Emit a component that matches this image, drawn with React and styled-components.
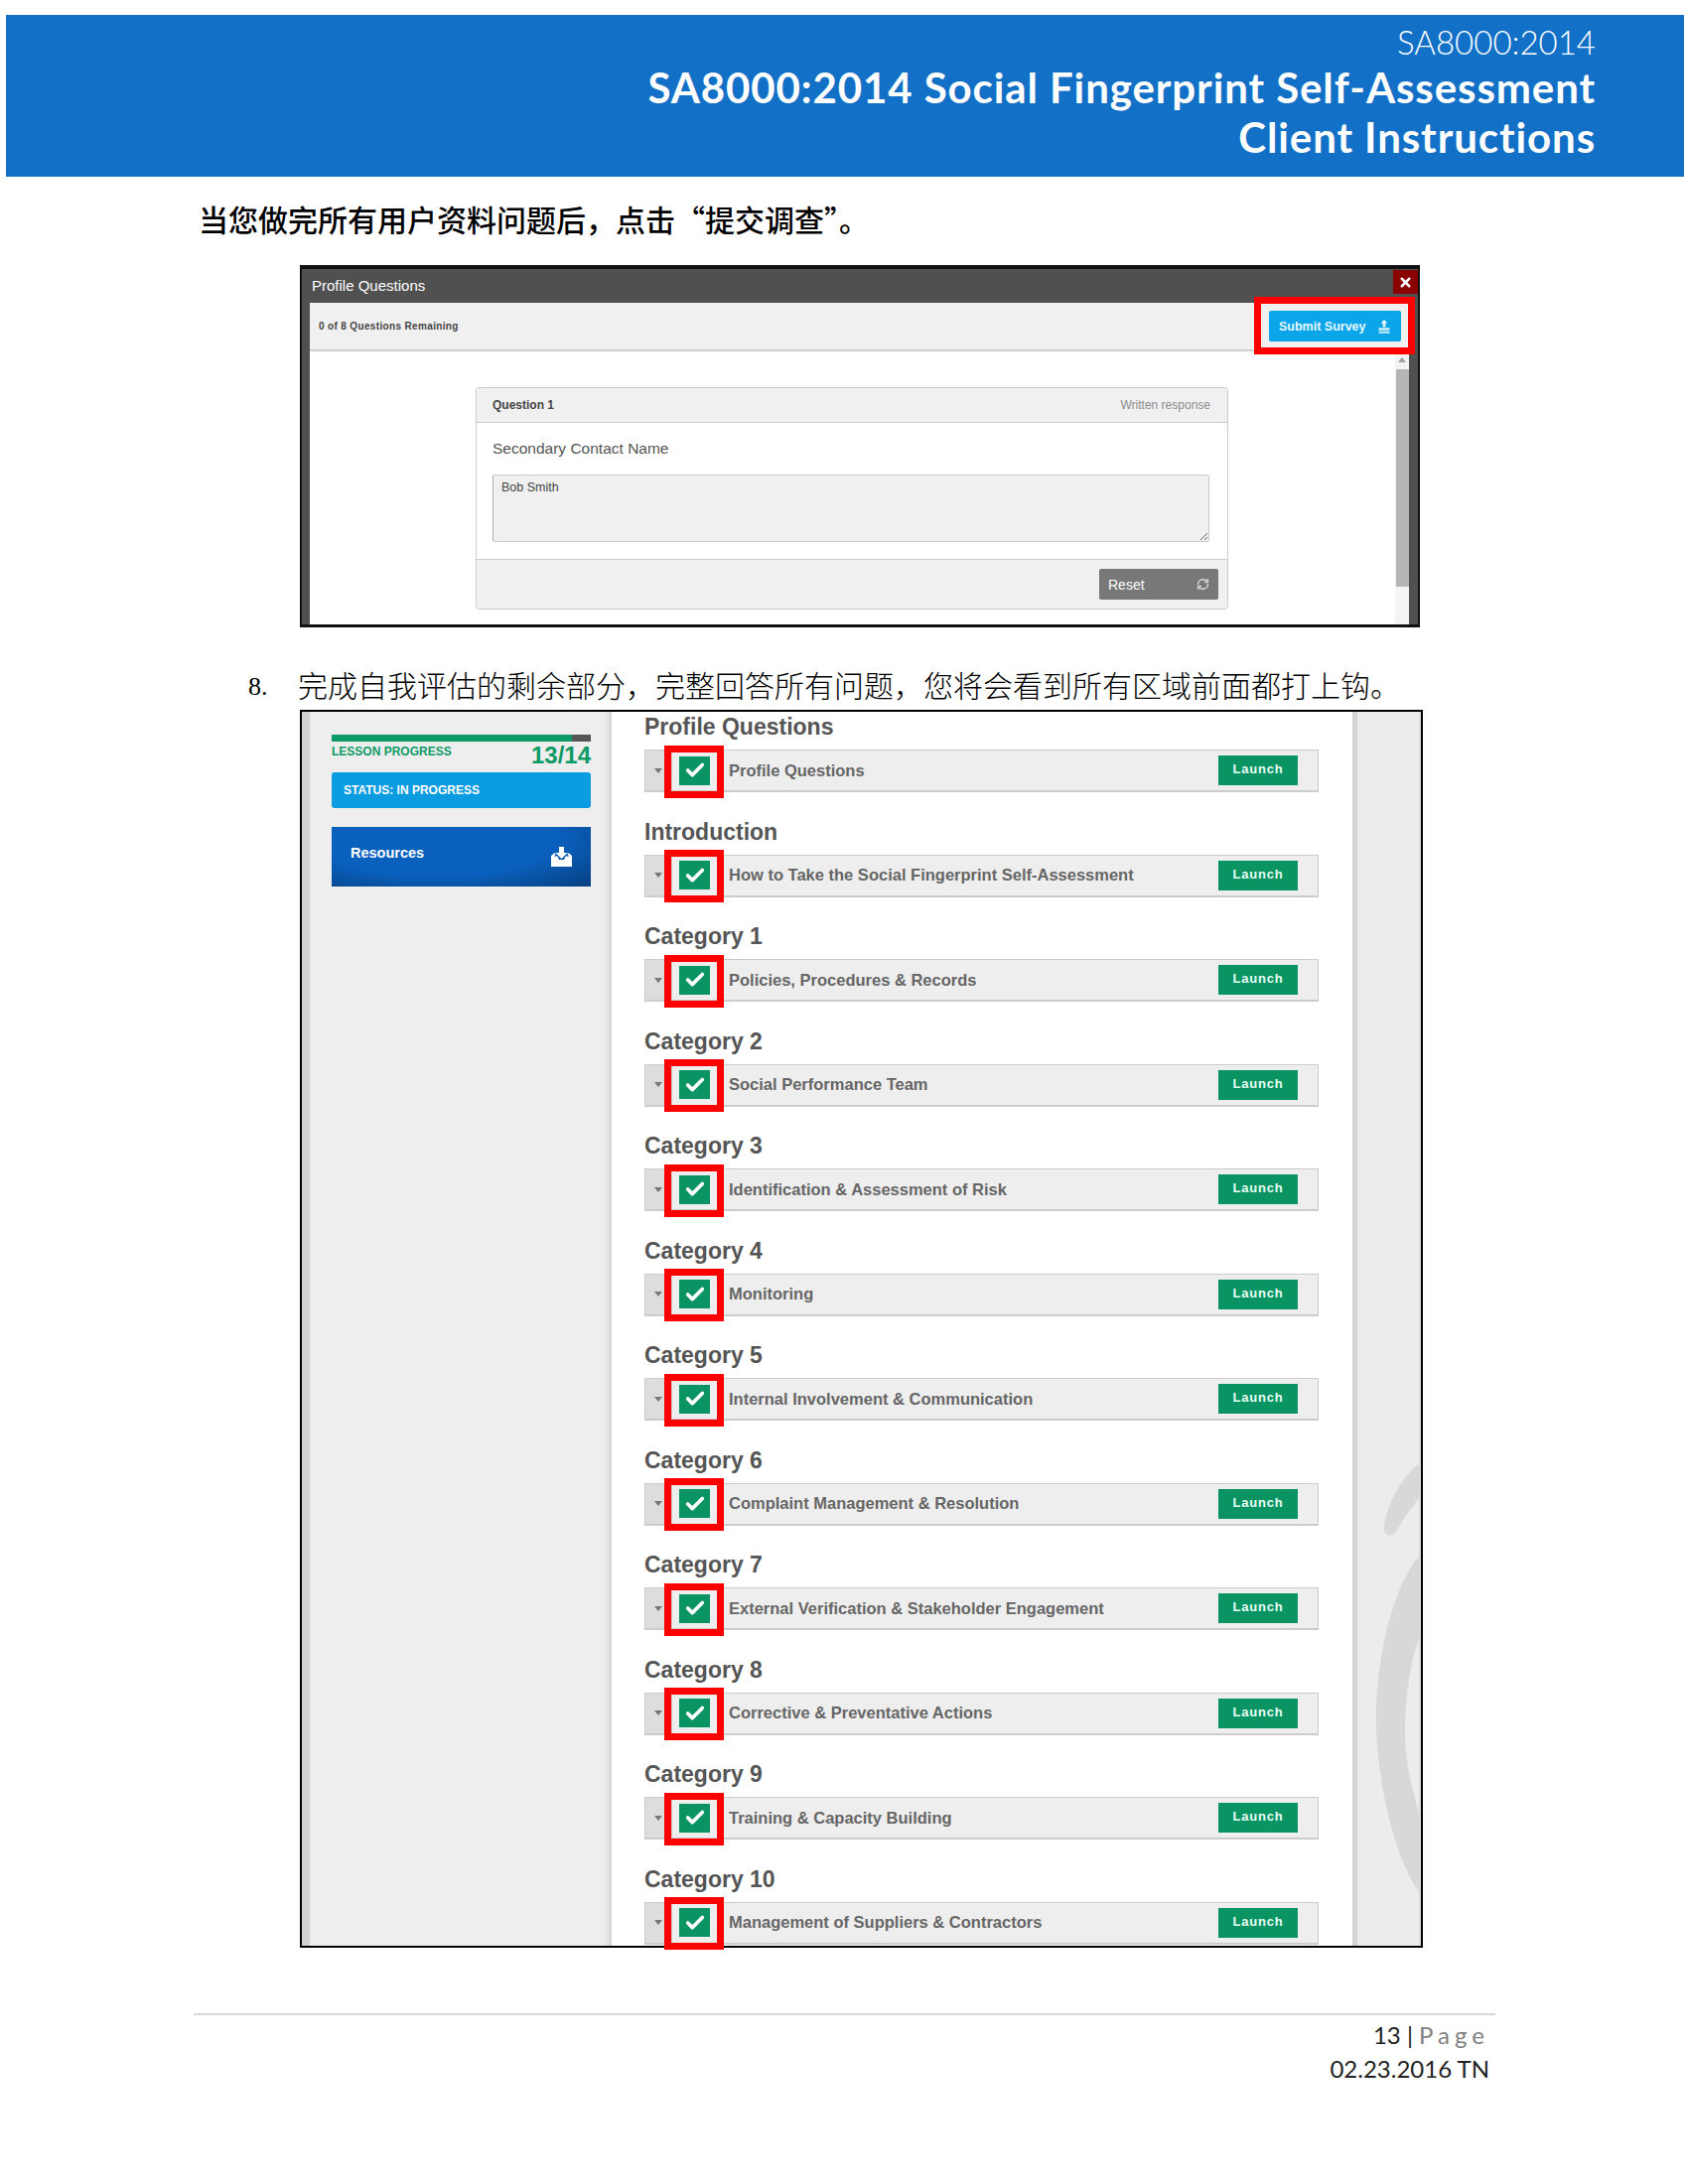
import React from "react";
import styled, { createGlobalStyle } from "styled-components";
import { Check, RefreshCw, X } from "lucide-react";

const GlobalStyle = createGlobalStyle`
  html, body {
    margin: 0;
    padding: 0;
    background: #fff;
  }
  * {
    box-sizing: border-box;
  }
`;

const Page = styled.div`
  width: 1700px;
  height: 2200px;
  padding-top: 15px;
  overflow: hidden;
  font-family: "Liberation Sans", Arial, sans-serif;
`;

const Banner = styled.header`
  width: 1690px;
  height: 163px;
  margin-left: 6px;
  padding: 6px 89px 0 0;
  background: #1270c7;
  color: #fff;
  font-family: Lato, "Liberation Sans", sans-serif;
  text-align: right;
`;

const BannerSub = styled.div`
  font-size: 33px;
  font-weight: 300;
  line-height: 42px;
`;

const BannerTitle = styled.div`
  font-size: 42px;
  font-weight: 700;
  line-height: 50px;
  letter-spacing: 0.9px;
`;

const Lead = styled.p`
  margin: 22px 0 0 200px;
  font-family: "Noto Sans CJK SC", sans-serif;
  font-size: 30px;
  font-weight: 500;
  line-height: 40px;
  color: #000;
`;

const Dialog = styled.section`
  display: flex;
  flex-direction: column;
  width: 1128px;
  height: 365px;
  margin: 27px 0 0 302px;
  padding: 0 9px 0 8px;
  background: #505050;
  border: solid #111;
  border-width: 4px 2px 3px;
`;

const DialogBar = styled.div`
  display: flex;
  justify-content: space-between;
  flex: 0 0 34px;
  margin-right: -9px;
  padding-left: 2px;
  color: #fff;
  font-size: 15px;
  line-height: 34px;
`;

const CloseButton = styled.div`
  display: flex;
  align-items: center;
  justify-content: center;
  width: 25px;
  height: 24px;
  margin-top: 1px;
  background: #8b0000;
  color: #fff;
`;

const Toolbar = styled.div`
  display: flex;
  align-items: center;
  justify-content: space-between;
  flex: 0 0 49px;
  padding: 0 8px 0 9px;
  background: #f0f0f0;
  border-bottom: 2px solid #d0d0d0;
  color: #444;
  font-size: 10px;
  font-weight: 700;
  letter-spacing: 0.35px;
`;

const SubmitButton = styled.div`
  position: relative;
  display: flex;
  align-items: center;
  justify-content: space-between;
  width: 133px;
  height: 31px;
  padding: 0 10px;
  background: #0ba5ea;
  border-radius: 2px;
  color: #e8f8ff;
  font-size: 12.5px;
  letter-spacing: 0;

  &::after {
    content: "";
    position: absolute;
    inset: -14px -14px -13px -15px;
    border: 7px solid #f00;
  }
`;

const DialogBody = styled.div`
  display: flex;
  flex: 1;
  min-height: 0;
  background: #fff;
`;

const DialogContent = styled.div`
  flex: 1;
  padding: 36px 0 0 167px;
`;

const Scrollbar = styled.div`
  display: flex;
  flex-direction: column;
  align-items: center;
  flex: 0 0 14px;
  padding-top: 6px;
  background: #f4f4f4;
`;

const ScrollArrow = styled.div`
  width: 0;
  height: 0;
  border: solid transparent;
  border-width: 0 4px 5px;
  border-bottom-color: #a0a0a0;
`;

const ScrollThumb = styled.div`
  width: 13px;
  height: 219px;
  margin-top: 7px;
  background: #b5b5b5;
`;

const QuestionCard = styled.div`
  width: 758px;
  height: 224px;
  background: #fff;
  border: 1px solid #ccc;
  border-radius: 3px;
`;

const CardHeader = styled.div`
  display: flex;
  align-items: center;
  justify-content: space-between;
  height: 35px;
  padding: 0 17px 0 16px;
  background: #f0f0f0;
  border-bottom: 1px solid #ccc;
  font-size: 12px;
`;

const QuestionNo = styled.span`
  color: #444;
  font-weight: 700;
`;

const QuestionKind = styled.span`
  color: #8c8c8c;
`;

const CardBody = styled.div`
  height: 137px;
  padding: 0 17px 0 16px;
`;

const QuestionLabel = styled.div`
  height: 52px;
  color: #555;
  font-size: 15.5px;
  line-height: 52px;
`;

const Answer = styled.textarea`
  display: block;
  width: 722px;
  height: 68px;
  padding: 5px 8px;
  background: #f0f0f0;
  border: 1px solid #ccc;
  border-left-color: #aaa;
  border-radius: 2px;
  color: #444;
  font-family: "Liberation Sans", Arial, sans-serif;
  font-size: 12.5px;
  resize: both;
  outline: none;
`;

const CardFooter = styled.div`
  display: flex;
  align-items: center;
  justify-content: flex-end;
  height: 50px;
  padding-right: 9px;
  background: #f0f0f0;
  border-top: 1px solid #ccc;
`;

const ResetButton = styled.div`
  display: flex;
  align-items: center;
  justify-content: space-between;
  width: 120px;
  height: 31px;
  padding: 0 9px;
  background: #787878;
  border-radius: 2px;
  color: #fff;
  font-size: 14px;

  svg {
    color: #ccc;
  }
`;

const Step = styled.p`
  display: flex;
  margin: 40px 0 0 250px;
  color: #000;
  font-family: "Liberation Serif", "Noto Sans CJK SC", serif;
  font-size: 30px;
  font-weight: 300;
  line-height: 40px;
`;

const StepNo = styled.span`
  width: 50px;
  font-size: 26px;
`;

const Shot = styled.section`
  display: flex;
  width: 1131px;
  height: 1247px;
  margin: 3px 0 0 302px;
  background: #eee;
  border: 2px solid #000;
`;

const Sidebar = styled.aside`
  flex: 0 0 312px;
  padding: 23px 21px 0 22px;
  background: #eee;
  border-left: 8px solid #d2d2d2;
  box-shadow: inset -10px 0 8px -8px #ccc;
`;

const ProgressTrack = styled.div`
  height: 7px;
  background: #555;
`;

const ProgressFill = styled.div`
  height: 100%;
  background: #0d9a65;
`;

const ProgressRow = styled.div`
  display: flex;
  align-items: flex-start;
  justify-content: space-between;
  height: 31px;
  color: #0d9a65;
  font-weight: 700;
`;

const ProgressLabel = styled.span`
  font-size: 12px;
  line-height: 20px;
`;

const ProgressCount = styled.span`
  font-size: 24px;
  line-height: 27px;
`;

const StatusBar = styled.div`
  height: 36px;
  padding-left: 12px;
  background: #0a9be0;
  border-radius: 3px;
  color: #fff;
  font-size: 12px;
  font-weight: 700;
  line-height: 36px;
`;

const ResourcesButton = styled.div`
  display: flex;
  align-items: center;
  justify-content: space-between;
  height: 60px;
  margin-top: 19px;
  padding: 0 19px;
  background: radial-gradient(ellipse at 40% 20%, #0a60bd 55%, #063f80 100%);
  color: #fff;
  font-size: 14.5px;
  font-weight: 700;
`;

const ResourcesLabel = styled.span`
  margin-bottom: 8px;
`;

const Content = styled.main`
  flex: 0 0 746px;
  padding: 0 34px 0 33px;
  background: #fff;
`;

const Section = styled.div`
  height: 105.5px;
`;

const SectionTitle = styled.h2`
  height: 30px;
  margin: 0 0 8px;
  color: #555;
  font-size: 23px;
  font-weight: 700;
  line-height: 30px;
`;

const Row = styled.div`
  display: flex;
  align-items: center;
  height: 43px;
  padding-right: 20px;
  background: #eee;
  border: 1px solid #ccc;
  border-bottom-width: 2px;
`;

const CaretCell = styled.div`
  display: flex;
  align-items: center;
  justify-content: flex-end;
  align-self: stretch;
  flex: 0 0 27px;
  padding-right: 8px;
  background: #ddd;
  border-right: 2px solid #ccc;
`;

const Caret = styled.div`
  width: 0;
  height: 0;
  border: solid transparent;
  border-width: 5px 4px 0;
  border-top-color: #777;
`;

const CheckBox = styled.div`
  position: relative;
  display: flex;
  align-items: center;
  justify-content: center;
  flex: 0 0 31px;
  height: 29px;
  margin: 0 19px 0 7px;
  background: #0a9463;
  color: #fff;

  &::after {
    content: "";
    position: absolute;
    inset: -11px -14px -13px -15px;
    border: 7px solid #f00;
  }
`;

const RowTitle = styled.span`
  flex: 1;
  color: #666;
  font-size: 16.5px;
  font-weight: 700;
`;

const LaunchButton = styled.div`
  width: 80px;
  height: 30px;
  background: #0a9463;
  color: #e6fff5;
  font-size: 13px;
  font-weight: 700;
  letter-spacing: 0.8px;
  line-height: 27px;
  text-align: center;
`;

const RightPanel = styled.aside`
  position: relative;
  flex: 1;
  overflow: hidden;
  background: #ececec;
  border-left: 5px solid #d4d4d4;
  border-right: 2px solid #ddd;
`;

const Swirl = styled.svg`
  position: absolute;
  top: 0;
  left: -5px;
`;

const FooterRule = styled.hr`
  width: 1311px;
  height: 2px;
  margin: 66px 0 0 195px;
  background: #d9d9d9;
  border: 0;
`;

const Footer = styled.footer`
  display: flex;
  flex-direction: column;
  align-items: flex-end;
  margin-top: 3px;
  padding-right: 200px;
  color: #222;
  font-family: Lato, "Liberation Sans", sans-serif;
  font-size: 24px;
  line-height: 34px;
`;

const PageWord = styled.span`
  color: #808080;
  letter-spacing: 5px;
`;

const sections = [
  ["Profile Questions", "Profile Questions"],
  ["Introduction", "How to Take the Social Fingerprint Self-Assessment"],
  ["Category 1", "Policies, Procedures & Records"],
  ["Category 2", "Social Performance Team"],
  ["Category 3", "Identification & Assessment of Risk"],
  ["Category 4", "Monitoring"],
  ["Category 5", "Internal Involvement & Communication"],
  ["Category 6", "Complaint Management & Resolution"],
  ["Category 7", "External Verification & Stakeholder Engagement"],
  ["Category 8", "Corrective & Preventative Actions"],
  ["Category 9", "Training & Capacity Building"],
  ["Category 10", "Management of Suppliers & Contractors"],
];

const UploadIcon = () => (
  <svg width="14" height="14" viewBox="0 0 14 14" fill="currentColor">
    <path d="M7 0 10.4 3.4H8.4V7.6H5.6V3.4H3.6Z" />
    <path d="M1.5 8.4H12.5V10.6H1.5Z" />
    <path d="M1.5 11.6H12.5V13.8H1.5Z" fillOpacity="0.8" />
  </svg>
);

const InboxIcon = () => (
  <svg width="21" height="20" viewBox="0 0 21 20" fill="currentColor">
    <path d="M8 0H13V6H16.5L10.5 12 4.5 6H8Z" />
    <path d="M0 9 3 6.5H5L3 9.5H6.5L8 13H13L14.5 9.5H18L16 6.5H18L21 9V20H0Z" />
  </svg>
);

export default function App() {
  return (
    <Page>
      <GlobalStyle />
      <Banner>
        <BannerSub>SA8000:2014</BannerSub>
        <BannerTitle>SA8000:2014 Social Fingerprint Self-Assessment</BannerTitle>
        <BannerTitle>Client Instructions</BannerTitle>
      </Banner>

      <Lead>当您做完所有用户资料问题后，点击“提交调查”。</Lead>

      <Dialog>
        <DialogBar>
          Profile Questions
          <CloseButton>
            <X size={15} strokeWidth={4} />
          </CloseButton>
        </DialogBar>
        <Toolbar>
          0 of 8 Questions Remaining
          <SubmitButton>
            Submit Survey
            <UploadIcon />
          </SubmitButton>
        </Toolbar>
        <DialogBody>
          <DialogContent>
            <QuestionCard>
              <CardHeader>
                <QuestionNo>Question 1</QuestionNo>
                <QuestionKind>Written response</QuestionKind>
              </CardHeader>
              <CardBody>
                <QuestionLabel>Secondary Contact Name</QuestionLabel>
                <Answer readOnly defaultValue="Bob Smith" />
              </CardBody>
              <CardFooter>
                <ResetButton>
                  Reset
                  <RefreshCw size={13} strokeWidth={3} />
                </ResetButton>
              </CardFooter>
            </QuestionCard>
          </DialogContent>
          <Scrollbar>
            <ScrollArrow />
            <ScrollThumb />
          </Scrollbar>
        </DialogBody>
      </Dialog>

      <Step>
        <StepNo>8.</StepNo>
        完成自我评估的剩余部分，完整回答所有问题，您将会看到所有区域前面都打上钩。
      </Step>

      <Shot>
        <Sidebar>
          <ProgressTrack>
            <ProgressFill style={{ width: `${(13 / 14) * 100}%` }} />
          </ProgressTrack>
          <ProgressRow>
            <ProgressLabel>LESSON PROGRESS</ProgressLabel>
            <ProgressCount>13/14</ProgressCount>
          </ProgressRow>
          <StatusBar>STATUS: IN PROGRESS</StatusBar>
          <ResourcesButton>
            <ResourcesLabel>Resources</ResourcesLabel>
            <InboxIcon />
          </ResourcesButton>
        </Sidebar>
        <Content>
          {sections.map(([heading, title]) => (
            <Section key={heading}>
              <SectionTitle>{heading}</SectionTitle>
              <Row>
                <CaretCell>
                  <Caret />
                </CaretCell>
                <CheckBox>
                  <Check size={22} strokeWidth={4} />
                </CheckBox>
                <RowTitle>{title}</RowTitle>
                <LaunchButton>Launch</LaunchButton>
              </Row>
            </Section>
          ))}
        </Content>
        <RightPanel>
          <Swirl width="69" height="1243" viewBox="0 0 69 1243" fill="#d8d8d8">
            <path d="M32 820C36 795 50 770 69 756V790C58 803 50 815 44 826 38 832 31 830 32 820Z" />
            <path d="M69 848C40 880 22 960 24 1025 27 1090 45 1160 69 1191V1115C58 1080 52 1050 53 1020 54 985 60 950 69 929Z" />
          </Swirl>
        </RightPanel>
      </Shot>

      <FooterRule />
      <Footer>
        <span>
          13 | <PageWord>Page</PageWord>
        </span>
        <span>02.23.2016 TN</span>
      </Footer>
    </Page>
  );
}
